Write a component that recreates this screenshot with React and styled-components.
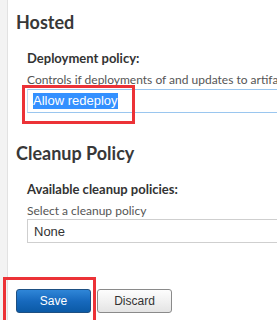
import React from 'react'
import styled, {createGlobalStyle} from 'styled-components'

const GlobalStyle = createGlobalStyle`
    html, body {
        margin: 0;
        padding: 0;
        background: #fff;
        overflow: hidden;
    }
    body {
        width: 277px;
        height: 320px;
    }
`

const Page = styled.div`
    display: flex;
    flex-flow: row;
    height: 320px;
    overflow: hidden;
`

const Rail = styled.div`
    flex: 0 0 7px;
    background-color: #f3f3f3;
    border-right: 1px solid #e2e2e2;
`

const Content = styled.div`
    flex: 1 0 auto;
    padding: 12px 0 0 8px;
    display: flex;
    flex-flow: column;
`

const Heading = styled.h2`
    margin: 0 0 ${p => p.gap}px 0;
    font-family: Lato, "Open Sans", sans-serif;
    font-weight: 700;
    font-size: 18px;
    line-height: 21px;
    color: #383838;
`

const Field = styled.div`
    display: flex;
    flex-flow: column;
    padding-left: 11px;
    margin-bottom: ${p => p.gap}px;

    >.label {
        font-family: Lato, "Open Sans", sans-serif;
        font-weight: 700;
        font-size: 13px;
        line-height: 16px;
        color: #333;
        margin-bottom: 6px;
    }

    >.help {
        font-family: Lato, "Open Sans", sans-serif;
        font-size: 12px;
        line-height: 16px;
        color: #555;
        white-space: nowrap;
        margin-bottom: ${p => p.helpGap}px;
    }
`

const Marked = styled.div`
    position: relative;
`

const RedBox = styled.div`
    position: absolute;
    left: ${p => p.x}px;
    top: ${p => p.y}px;
    width: ${p => p.w}px;
    height: ${p => p.h}px;
    box-sizing: border-box;
    border: 3px solid #ec3237;
    pointer-events: none;
`

const TextBox = styled.div`
    box-sizing: border-box;
    width: 300px;
    height: 24px;
    display: flex;
    align-items: center;
    padding-left: ${p => p.focused ? 5 : 6}px;
    border: 1px solid ${p => p.focused ? '#9ac6ef' : '#cfcfcf'};
    border-left-color: ${p => p.focused ? '#c4dcf3' : '#cfcfcf'};
    background: #fff;
    font-family: "Liberation Sans", Arial, sans-serif;
    font-size: 13px;
    color: #333;
`

const Selection = styled.span`
    display: inline-block;
    height: 16px;
    line-height: 16px;
    background: #3390ff;
    color: #fff;
`

const Buttons = styled.div`
    display: flex;
    flex-flow: row;
    gap: 6px;
    margin-top: 46px;
`

const Button = styled.button`
    box-sizing: border-box;
    width: 75px;
    height: 24px;
    padding: 0;
    border-radius: 3px;
    font-family: "Liberation Sans", Arial, sans-serif;
    font-size: 12px;
    cursor: pointer;
    border: 1px solid ${p => p.primary ? '#1d4f82' : '#8a8a8a'};
    color: ${p => p.primary ? '#fff' : '#333'};
    background: ${p => p.primary
        ? 'linear-gradient(to bottom, #2f86d8 0%, #1769bd 50%, #0b5aa6 100%)'
        : 'linear-gradient(to bottom, #fdfdfd 0%, #f1f1f1 50%, #e4e4e4 100%)'};
`

const App = () => (
    <Page>
        <GlobalStyle/>
        <Rail/>
        <Content>
            <Heading gap={17}>Hosted</Heading>
            <Field gap={30} helpGap={1}>
                <span className="label">Deployment policy:</span>
                <span className="help">Controls if deployments of and updates to artifacts are allowed</span>
                <Marked>
                    <TextBox focused>
                        <Selection>Allow redeploy</Selection>
                    </TextBox>
                    <RedBox x={-5} y={-4} w={113} h={39}/>
                </Marked>
            </Field>
            <Heading gap={17}>Cleanup Policy</Heading>
            <Field gap={0} helpGap={0}>
                <span className="label">Available cleanup policies:</span>
                <span className="help">Select a cleanup policy</span>
                <TextBox>None</TextBox>
            </Field>
            <Buttons>
                <Marked>
                    <Button primary>Save</Button>
                    <RedBox x={-13} y={-12} w={93} h={46}/>
                </Marked>
                <Button>Discard</Button>
            </Buttons>
        </Content>
    </Page>
)

export default App
